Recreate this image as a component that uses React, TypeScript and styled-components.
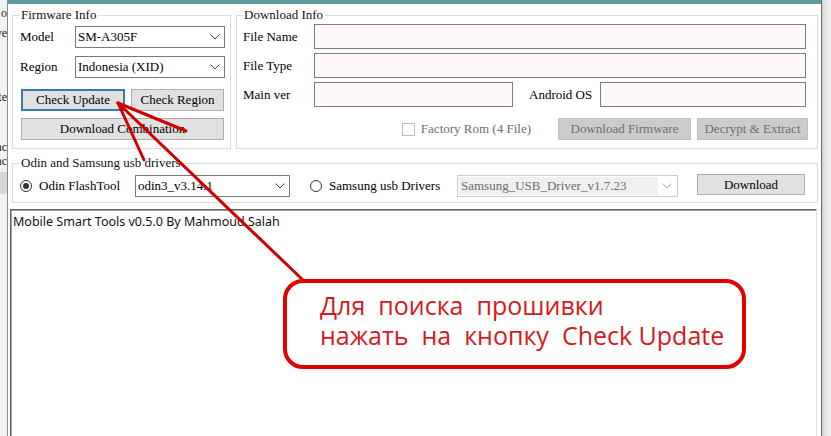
import React from "react";
import styled, { createGlobalStyle } from "styled-components";

const GlobalStyle = createGlobalStyle`
  html, body { margin: 0; padding: 0; width: 831px; height: 436px; overflow: hidden; background: #fff; }
  #root { width: 831px; height: 436px; }
  * { box-sizing: border-box; }
`;

const Desktop = styled.div`
  position: relative;
  display: flex;
  width: 831px;
  height: 436px;
  overflow: hidden;
  font-family: "Liberation Serif", "Times New Roman", serif;
  font-size: 13px;
  color: #000;
`;

const Behind = styled.div`
  width: 7px;
  flex: none;
  background: #f2f2f2;
  display: flex;
  flex-direction: column;
  overflow: hidden;
`;

const BehindText = styled.div<{ $top: number }>`
  margin-top: ${(p) => p.$top}px;
  height: 14px;
  line-height: 14px;
  font-size: 12px;
  display: flex;
  justify-content: flex-end;
  overflow: hidden;
  white-space: nowrap;
  color: #222;
`;

const BehindBand = styled.div`
  margin-top: 4px;
  height: 22px;
  background: #d6d6d6;
`;

const RightShade = styled.div`
  width: 9px;
  flex: none;
  background: linear-gradient(to right, #cfcfcf, #e9e9e9 40%, #f1f1f1);
`;

const Window = styled.div`
  flex: 1;
  min-width: 0;
  display: flex;
  flex-direction: column;
  background: #fff;
  border-left: 1px solid #8a8a8a;
  border-right: 1px solid #6e6e6e;
  overflow: hidden;
`;

const TitleStrip = styled.div`
  height: 4px;
  flex: none;
  background: #5f9c9e;
`;

const Content = styled.div`
  padding: 3px 3px 0 4px;
  display: flex;
  flex-direction: column;
`;

const TopRow = styled.div`
  display: flex;
  gap: 5px;
  align-items: stretch;
`;

const Group = styled.fieldset<{ $w?: number; $pad: string; $mt?: number }>`
  margin: ${(p) => p.$mt ?? 0}px 0 0 0;
  min-width: 0;
  border: 1px solid #dcdcdc;
  padding: ${(p) => p.$pad};
  ${(p) => (p.$w ? `width: ${p.$w}px; flex: none;` : "flex: 1;")}
`;

const Legend = styled.legend`
  padding: 0 2px 0 1px;
  font-size: 13px;
  line-height: 16px;
  color: #111;
`;

const FormRow = styled.div<{ $mt?: number }>`
  display: flex;
  align-items: center;
  margin-top: ${(p) => p.$mt ?? 0}px;
`;

const Label = styled.span<{ $w: number; $ml?: number }>`
  width: ${(p) => p.$w}px;
  margin-left: ${(p) => p.$ml ?? 0}px;
  flex: none;
  white-space: nowrap;
`;

const Combo = styled.div<{ $w: number }>`
  width: ${(p) => p.$w}px;
  height: 22px;
  flex: none;
  display: flex;
  align-items: center;
  justify-content: space-between;
  border: 1px solid #7a7a7a;
  background: #fff;
  padding: 0 4px 0 2px;
  white-space: nowrap;
`;

const DisabledCombo = styled.div<{ $w: number }>`
  width: ${(p) => p.$w}px;
  height: 22px;
  flex: none;
  display: flex;
  align-items: stretch;
  border: 1px solid #cccccc;
  background: #fff;
  color: #6d6d6d;
  padding: 1px;
`;

const DisabledComboText = styled.div`
  flex: 1;
  background: #f0f0f0;
  padding-left: 2px;
  display: flex;
  align-items: center;
  white-space: nowrap;
`;

const DisabledChevronBox = styled.div`
  width: 18px;
  display: flex;
  align-items: center;
  justify-content: center;
`;

const TextBox = styled.div<{ $w?: number }>`
  height: 25px;
  ${(p) => (p.$w ? `width: ${p.$w}px; flex: none;` : "flex: 1;")}
  border: 1px solid #7d7d7d;
  background: #fff8f8;
`;

const Button = styled.button<{
  $w?: number;
  $h?: number;
  $focused?: boolean;
  $disabledLook?: boolean;
  $ml?: number;
  $top?: boolean;
}>`
  height: ${(p) => p.$h ?? 22}px;
  ${(p) => (p.$w ? `width: ${p.$w}px; flex: none;` : "flex: 1;")}
  ${(p) => (p.$top ? "align-self: flex-start;" : "")}
  margin: 0 0 0 ${(p) => p.$ml ?? 0}px;
  padding: 0;
  font-family: "Liberation Serif", "Times New Roman", serif;
  font-size: 13px;
  background: ${(p) => (p.$disabledLook ? "#cccccc" : "#e1e1e1")};
  color: ${(p) => (p.$disabledLook ? "#6d6d6d" : "#000")};
  border: ${(p) =>
    p.$focused ? "2px solid #3a79ab" : p.$disabledLook ? "1px solid #bfbfbf" : "1px solid #adadad"};
  white-space: nowrap;
`;

const ButtonRow = styled.div<{ $mt: number }>`
  display: flex;
  gap: 6px;
  margin: ${(p) => p.$mt}px 2px 0 1px;
`;

const ActionRow = styled.div`
  display: flex;
  align-items: center;
  justify-content: flex-end;
  margin: 11px -2px 0 0;
`;

const CheckBox = styled.span`
  width: 13px;
  height: 13px;
  flex: none;
  border: 1px solid #bcbcbc;
  background: #fff;
`;

const GrayText = styled.span`
  margin-left: 6px;
  color: #6d6d6d;
  white-space: nowrap;
`;

const OdinRow = styled.div`
  display: flex;
  align-items: center;
  height: 23px;
`;

const RadioOption = styled.div<{ $w: number; $ml?: number }>`
  width: ${(p) => p.$w}px;
  margin-left: ${(p) => p.$ml ?? 0}px;
  flex: none;
  display: flex;
  align-items: center;
  gap: 7px;
  white-space: nowrap;
`;

const Radio = styled.span<{ $checked?: boolean }>`
  width: 12px;
  height: 12px;
  flex: none;
  border-radius: 50%;
  border: 1px solid #333;
  display: flex;
  align-items: center;
  justify-content: center;
  &::after {
    content: "";
    width: 6px;
    height: 6px;
    border-radius: 50%;
    background: ${(p) => (p.$checked ? "#333" : "transparent")};
  }
`;

const Log = styled.div`
  margin: 6px 1px 0 -2px;
  height: 240px;
  flex: none;
  border: 1px solid;
  border-color: #646464 #e3e3e3 #e3e3e3 #646464;
  box-shadow: inset 1px 1px 0 #a0a0a0;
  padding: 4px 2px;
  font-family: "Noto Sans", "Open Sans", sans-serif;
  font-size: 12.5px;
  line-height: 16px;
  color: #111;
`;

const Callout = styled.div`
  position: absolute;
  left: 283px;
  top: 279px;
  width: 463px;
  height: 90px;
  border: 4px solid #e30000;
  border-radius: 20px;
  padding: 7px 0 0 33px;
  font-family: "Open Sans", "Noto Sans", sans-serif;
  font-size: 25px;
  line-height: 30px;
  color: #d41a1a;
  white-space: pre;
`;

const Overlay = styled.svg`
  position: absolute;
  left: 0;
  top: 0;
  pointer-events: none;
`;

const Chevron = ({ color = "#444" }: { color?: string }) => (
  <svg width="10" height="6" viewBox="0 0 10 6">
    <polyline points="0.5,0.5 5,5 9.5,0.5" fill="none" stroke={color} strokeWidth="1" />
  </svg>
);

export default function App() {
  return (
    <>
      <GlobalStyle />
      <Desktop>
        <Behind>
          <BehindText $top={6}>o</BehindText>
          <BehindText $top={6}>ve</BehindText>
          <BehindText $top={50}>te</BehindText>
          <BehindText $top={36}>nc</BehindText>
          <BehindText $top={0}>nc</BehindText>
          <BehindBand />
        </Behind>
        <Window>
          <TitleStrip />
          <Content>
            <TopRow>
              <Group $w={219} $pad="3px 4px 8px 7px">
                <Legend>Firmware Info</Legend>
                <FormRow>
                  <Label $w={55}>Model</Label>
                  <Combo $w={150}>
                    SM-A305F
                    <Chevron />
                  </Combo>
                </FormRow>
                <FormRow $mt={8}>
                  <Label $w={55}>Region</Label>
                  <Combo $w={150}>
                    Indonesia (XID)
                    <Chevron />
                  </Combo>
                </FormRow>
                <ButtonRow $mt={11}>
                  <Button $w={104} $focused>
                    Check Update
                  </Button>
                  <Button>Check Region</Button>
                </ButtonRow>
                <ButtonRow $mt={7}>
                  <Button>Download Combination</Button>
                </ButtonRow>
              </Group>
              <Group $pad="1px 11px 8px 6px">
                <Legend>Download Info</Legend>
                <FormRow>
                  <Label $w={71}>File Name</Label>
                  <TextBox />
                </FormRow>
                <FormRow $mt={4}>
                  <Label $w={71}>File Type</Label>
                  <TextBox />
                </FormRow>
                <FormRow $mt={4}>
                  <Label $w={71}>Main ver</Label>
                  <TextBox $w={199} />
                  <Label $w={71} $ml={16}>
                    Android OS
                  </Label>
                  <TextBox />
                </FormRow>
                <ActionRow>
                  <CheckBox />
                  <GrayText>Factory Rom (4 File)</GrayText>
                  <Button $w={133} $ml={27} $disabledLook>
                    Download Firmware
                  </Button>
                  <Button $w={111} $ml={6} $disabledLook>
                    Decrypt &amp; Extract
                  </Button>
                </ActionRow>
              </Group>
            </TopRow>
            <Group $pad="3px 12px 5px 7px" $mt={6}>
              <Legend>Odin and Samsung usb drivers</Legend>
              <OdinRow>
                <RadioOption $w={115}>
                  <Radio $checked />
                  Odin FlashTool
                </RadioOption>
                <Combo $w={155}>
                  odin3_v3.14.1
                  <Chevron />
                </Combo>
                <RadioOption $w={147} $ml={20}>
                  <Radio />
                  Samsung usb Drivers
                </RadioOption>
                <DisabledCombo $w={221}>
                  <DisabledComboText>Samsung_USB_Driver_v1.7.23</DisabledComboText>
                  <DisabledChevronBox>
                    <Chevron color="#b0b0b0" />
                  </DisabledChevronBox>
                </DisabledCombo>
                <Button $w={108} $ml={19} $h={21} $top>
                  Download
                </Button>
              </OdinRow>
            </Group>
            <Log>Mobile Smart Tools v0.5.0 By Mahmoud Salah</Log>
          </Content>
        </Window>
        <RightShade />
        <Overlay width="831" height="436" viewBox="0 0 831 436">
          <g stroke="#cf0000" strokeWidth="3" strokeLinecap="round" fill="none">
            <line x1="304" y1="281" x2="118" y2="103" />
            <line x1="118" y1="103" x2="186" y2="131" />
            <line x1="118" y1="103" x2="144" y2="160" />
          </g>
        </Overlay>
        <Callout>{"Для  поиска  прошивки\nнажать  на  кнопку  Check Update"}</Callout>
      </Desktop>
    </>
  );
}
